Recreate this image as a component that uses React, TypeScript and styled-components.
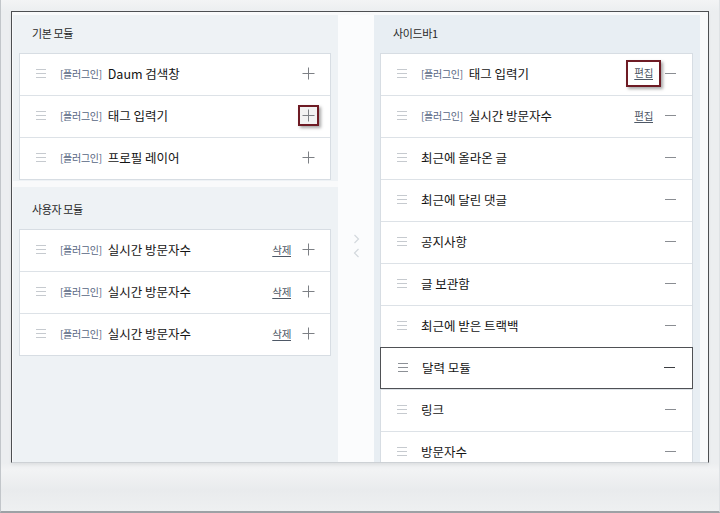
import React from "react";
import styled, { createGlobalStyle } from "styled-components";

const GlobalStyle = createGlobalStyle`
  html, body {
    margin: 0;
    padding: 0;
    background: #f4f5f6;
  }
  body {
    font-family: "Noto Sans CJK KR", "Noto Sans", sans-serif;
  }
`;

const Frame = styled.div`
  width: 720px;
  height: 513px;
  box-sizing: border-box;
  padding: 11px 10px 0 10px;
  background: linear-gradient(
      180deg,
      #f3f4f5 0px,
      #eceef0 11px,
      #eceef0 463px,
      #f2f3f4 470px,
      #e9ebed 490px,
      #eef0f1 511px
    ),
    #eceef0;
  border-left: 1px solid #c2c6ca;
  border-right: 1px solid #dfe2e5;
  border-bottom: 2px solid #9da1a5;
`;

const Window = styled.div`
  height: 452px;
  box-sizing: border-box;
  border: 1px solid #4d4f52;
  border-bottom-color: #cdd1d5;
  background: #f9fafb;
  display: flex;
  padding: 3px 7px 0 1px;
  overflow: hidden;
  box-shadow: 0 2px 3px rgba(0, 0, 0, 0.06);
`;

const LeftColumn = styled.div`
  width: 325px;
  display: flex;
  flex-direction: column;
  gap: 6px;
`;

const Section = styled.section<{ $grow?: boolean; $tint?: string }>`
  background: ${(p) => p.$tint || "#eef2f5"};
  padding: 0 7px 1px 6px;
  ${(p) => (p.$grow ? "flex: 1;" : "")}
`;

const Title = styled.h3<{ $top?: number }>`
  margin: 0;
  padding: ${(p) => p.$top ?? 10}px 0 12px 13px;
  font-size: 11px;
  line-height: 16px;
  font-weight: 400;
  letter-spacing: -0.4px;
  color: #2a2a2a;
`;

const Card = styled.div`
  background: #fff;
  border: 1px solid #d7dde3;
`;

const Row = styled.div<{ $selected?: boolean }>`
  height: 39px;
  display: flex;
  align-items: center;
  padding: 0 15px 2px 16px;
  background: #fff;
  border-top: 1px solid #dde2e7;
  &:first-child {
    border-top: none;
  }
  ${(p) =>
    p.$selected
      ? `
    margin: 0 -1px;
    padding: 0 16px 2px 17px;
    border: 1px solid #4f5155;
    height: 38px;
  `
      : ""}
`;

const Handle = styled.span<{ $dark?: boolean }>`
  width: 10px;
  height: 7px;
  margin-right: 14px;
  flex: none;
  border-top: 1px solid ${(p) => (p.$dark ? "#8c9096" : "#c6cacf")};
  border-bottom: 1px solid ${(p) => (p.$dark ? "#8c9096" : "#c6cacf")};
  background: linear-gradient(
      ${(p) => (p.$dark ? "#8c9096" : "#c6cacf")},
      ${(p) => (p.$dark ? "#8c9096" : "#c6cacf")}
    )
    center / 100% 1px no-repeat;
`;

const Tag = styled.span`
  font-size: 10px;
  color: #56657f;
  letter-spacing: -0.3px;
  margin-right: 6px;
`;

const Name = styled.span`
  flex: 1;
  font-size: 12.5px;
  color: #141414;
  white-space: nowrap;
`;

const LinkText = styled.span<{ $marked?: boolean }>`
  font-size: 10.5px;
  color: #4e5866;
  text-decoration: underline;
  text-underline-offset: 2px;
  letter-spacing: -0.3px;
  margin-right: 11px;
  line-height: 14px;
  ${(p) =>
    p.$marked
      ? `
    padding: 4px 6px 5px;
    margin: 0 3px 0 -8px;
    border: 2px solid #6e1b24;
    box-shadow: 2px 2px 3px rgba(0, 0, 0, 0.35);
  `
      : ""}
`;

const IconBox = styled.span<{ $marked?: boolean }>`
  width: 13px;
  height: 13px;
  display: flex;
  flex: none;
  ${(p) =>
    p.$marked
      ? `
    padding: 2px;
    margin: -4px;
    border: 2px solid #6e1b24;
    background: #f2f2f2;
    box-shadow: 2px 2px 3px rgba(0, 0, 0, 0.35);
  `
      : ""}
`;

const Gutter = styled.div`
  width: 36px;
  flex: none;
  display: flex;
  flex-direction: column;
  align-items: center;
  gap: 4px;
  padding-top: 219px;
  background: #fbfcfd;
`;

const RightColumn = styled.div`
  width: 326px;
  flex: none;
  display: flex;
  flex-direction: column;
`;

const Plus = () => (
  <svg width="13" height="13" viewBox="0 0 13 13">
    <path d="M6.5 0.5v12M0.5 6.5h12" stroke="#7d8085" strokeWidth="1" />
  </svg>
);

const Minus = ({ dark }: { dark?: boolean }) => (
  <svg width="13" height="13" viewBox="0 0 13 13">
    <path d="M1 6.5h11" stroke={dark ? "#3c3e42" : "#8a8d92"} strokeWidth="1" />
  </svg>
);

const Chevron = ({ dir }: { dir: "left" | "right" }) => (
  <svg width="7" height="10" viewBox="0 0 7 10">
    <path
      d={dir === "right" ? "M1.5 1l4 4-4 4" : "M5.5 1l-4 4 4 4"}
      fill="none"
      stroke="#d3d8dd"
      strokeWidth="1.2"
    />
  </svg>
);

type Item = {
  name: string;
  plugin?: boolean;
  link?: string;
  markLink?: boolean;
  markIcon?: boolean;
  selected?: boolean;
};

const ModuleRow = ({ item, kind }: { item: Item; kind: "add" | "remove" }) => (
  <Row $selected={item.selected}>
    <Handle $dark={item.selected} />
    {item.plugin && <Tag>[플러그인]</Tag>}
    <Name>{item.name}</Name>
    {item.link && <LinkText $marked={item.markLink}>{item.link}</LinkText>}
    <IconBox $marked={item.markIcon}>
      {kind === "add" ? <Plus /> : <Minus dark={item.selected} />}
    </IconBox>
  </Row>
);

const basic: Item[] = [
  { name: "Daum 검색창", plugin: true },
  { name: "태그 입력기", plugin: true, markIcon: true },
  { name: "프로필 레이어", plugin: true },
];

const custom: Item[] = [
  { name: "실시간 방문자수", plugin: true, link: "삭제" },
  { name: "실시간 방문자수", plugin: true, link: "삭제" },
  { name: "실시간 방문자수", plugin: true, link: "삭제" },
];

const sidebar: Item[] = [
  { name: "태그 입력기", plugin: true, link: "편집", markLink: true },
  { name: "실시간 방문자수", plugin: true, link: "편집" },
  { name: "최근에 올라온 글" },
  { name: "최근에 달린 댓글" },
  { name: "공지사항" },
  { name: "글 보관함" },
  { name: "최근에 받은 트랙백" },
  { name: "달력 모듈", selected: true },
  { name: "링크" },
  { name: "방문자수" },
];

export default function App() {
  return (
    <>
      <GlobalStyle />
      <Frame>
        <Window>
          <LeftColumn>
            <Section>
              <Title>기본 모듈</Title>
              <Card>
                {basic.map((it, i) => (
                  <ModuleRow key={i} item={it} kind="add" />
                ))}
              </Card>
            </Section>
            <Section $grow>
              <Title $top={14}>사용자 모듈</Title>
              <Card>
                {custom.map((it, i) => (
                  <ModuleRow key={i} item={it} kind="add" />
                ))}
              </Card>
            </Section>
          </LeftColumn>
          <Gutter>
            <Chevron dir="right" />
            <Chevron dir="left" />
          </Gutter>
          <RightColumn>
            <Section $grow $tint="#e8eef3">
              <Title>사이드바1</Title>
              <Card>
                {sidebar.map((it, i) => (
                  <ModuleRow key={i} item={it} kind="remove" />
                ))}
              </Card>
            </Section>
          </RightColumn>
        </Window>
      </Frame>
    </>
  );
}
